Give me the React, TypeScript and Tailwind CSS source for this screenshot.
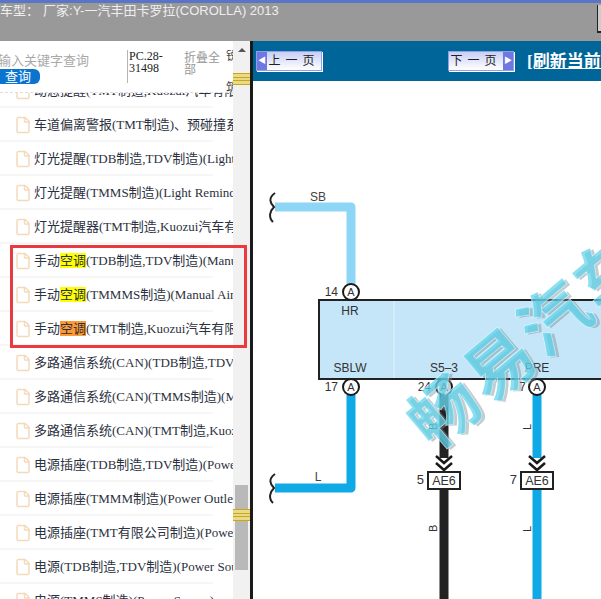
import { File } from "lucide-react"

const SERIF = '"Liberation Serif", "Noto Sans CJK SC", serif'
const SANS = '"Liberation Sans", "Noto Sans CJK SC", sans-serif'

interface Row {
  before: string
  hit?: string
  hitClass?: string
  after: string
}

const rows: Row[] = [
  { before: "动态提醒(TMT制造,Kuozui汽车有限公司制造)", after: "" },
  { before: "车道偏离警报(TMT制造)、预碰撞系统", after: "" },
  { before: "灯光提醒(TDB制造,TDV制造)(Light Reminder)", after: "" },
  { before: "灯光提醒(TMMS制造)(Light Reminder)", after: "" },
  { before: "灯光提醒器(TMT制造,Kuozui汽车有限公司)", after: "" },
  { before: "手动", hit: "空调", hitClass: "bg-[#ffff00]", after: "(TDB制造,TDV制造)(Manual Air)" },
  { before: "手动", hit: "空调", hitClass: "bg-[#ffff00]", after: "(TMMMS制造)(Manual Air)" },
  { before: "手动", hit: "空调", hitClass: "bg-[#ff9a33]", after: "(TMT制造,Kuozui汽车有限公司)" },
  { before: "多路通信系统(CAN)(TDB制造,TDV制造)", after: "" },
  { before: "多路通信系统(CAN)(TMMS制造)(Multiplex)", after: "" },
  { before: "多路通信系统(CAN)(TMT制造,Kuozui汽车)", after: "" },
  { before: "电源插座(TDB制造,TDV制造)(Power Outlet)", after: "" },
  { before: "电源插座(TMMM制造)(Power Outlet)", after: "" },
  { before: "电源插座(TMT有限公司制造)(Power Outlet)", after: "" },
  { before: "电源(TDB制造,TDV制造)(Power Source)", after: "" },
  { before: "电源(TMMS制造)(Power Source)", after: "" },
]

function Grip() {
  return (
    <div className="flex h-[12px] w-[17px] flex-col justify-between bg-[#ead98a]">
      <div className="h-[1px] bg-[#c9a912]" />
      <div className="h-[1px] bg-[#c9a912]" />
      <div className="h-[1px] bg-[#c9a912]" />
      <div className="h-[1px] bg-[#c9a912]" />
    </div>
  )
}

function PageButton({ label, dir }: { label: string; dir: "prev" | "next" }) {
  const arrow = (
    <div className="flex h-full w-[10px] items-center justify-center bg-[#6f78e0] text-[8px] leading-none text-white">
      {dir === "prev" ? "◀" : "▶"}
    </div>
  )
  return (
    <div className="flex h-[20px] w-[66px] border border-[#8fa0e8] bg-gradient-to-b from-[#c9cff5] to-white shadow-[1px_1px_0_#fff]">
      {dir === "prev" && arrow}
      <div className="flex-1 text-center text-[12px] leading-[19px] tracking-[5px] whitespace-nowrap text-[#222]">{label}</div>
      {dir === "next" && arrow}
    </div>
  )
}

function Pin({ x, y }: { x: number; y: number }) {
  return (
    <g>
      <circle cx={x} cy={y} r="8" fill="#fff" stroke="#1a1a1a" strokeWidth="2" />
      <text x={x} y={y + 4} textAnchor="middle" fontSize="11" fill="#333">A</text>
    </g>
  )
}

function Connector({ x, num }: { x: number; num: string }) {
  return (
    <g>
      <path d={`M${x - 8} 456 L${x} 463 L${x + 8} 456 M${x - 8} 463 L${x} 470 L${x + 8} 463`} fill="none" stroke="#1a1a1a" strokeWidth="2.5" />
      <rect x={x - 16} y="472" width="32" height="17" fill="#fff" stroke="#222" strokeWidth="2" />
      <text x={x} y="485" textAnchor="middle" fontSize="12.5" fill="#333">AE6</text>
      <text x={x - 20} y="484" textAnchor="end" fontSize="13" fill="#333">{num}</text>
    </g>
  )
}

function Diagram() {
  // coordinates are page coordinates, the viewBox starts at the panel's corner
  return (
    <svg viewBox="253 81 348 518" className="block h-[518px] w-[348px]" style={{ fontFamily: '"Liberation Sans", sans-serif' }}>
      <path d="M275 207 H351 V290" fill="none" stroke="#8dd6f5" strokeWidth="9" strokeLinejoin="round" />
      <path d="M275 193 C268 198 270 203 274 207 C270 211 268 217 273 222" fill="none" stroke="#222" strokeWidth="2" />
      <text x="318" y="201" textAnchor="middle" fontSize="12" fill="#444">SB</text>

      <rect x="319" y="300" width="290" height="79" fill="#c4e6f8" stroke="#222" strokeWidth="2" />
      <path d="M394 301 V378" stroke="#e6f4fb" strokeWidth="1" />
      <text x="350" y="315" textAnchor="middle" fontSize="12" fill="#333">HR</text>
      <text x="350" y="372" textAnchor="middle" fontSize="12" fill="#333">SBLW</text>
      <text x="444" y="372" textAnchor="middle" fontSize="12" fill="#333">S5–3</text>
      <text x="537" y="372" textAnchor="middle" fontSize="12" fill="#333">PRE</text>

      <path d="M351 395 V488 H275" fill="none" stroke="#0fa9e6" strokeWidth="9" strokeLinejoin="round" />
      <path d="M275 474 C268 479 270 484 274 488 C270 492 268 498 273 503" fill="none" stroke="#222" strokeWidth="2" />
      <text x="318" y="481" textAnchor="middle" fontSize="12" fill="#444">L</text>

      <path d="M444 395 V458" stroke="#222" strokeWidth="9" />
      <path d="M444 488 V599" stroke="#222" strokeWidth="9" />
      <path d="M537 395 V458" stroke="#0fa9e6" strokeWidth="9" />
      <path d="M537 488 V599" stroke="#0fa9e6" strokeWidth="9" />

      <Pin x={351} y={292} />
      <Pin x={351} y={387} />
      <Pin x={444} y={387} />
      <Pin x={537} y={387} />
      <text x="338" y="296" textAnchor="end" fontSize="12" fill="#333">14</text>
      <text x="338" y="391" textAnchor="end" fontSize="12" fill="#333">17</text>
      <text x="431" y="391" textAnchor="end" fontSize="12" fill="#333">24</text>
      <text x="526" y="391" textAnchor="end" fontSize="12" fill="#333">7</text>

      <Connector x={444} num="5" />
      <Connector x={537} num="7" />

      <text transform="translate(437 430) rotate(-90)" fontSize="11" fill="#333">B</text>
      <text transform="translate(437 532) rotate(-90)" fontSize="11" fill="#333">B</text>
      <text transform="translate(531 430) rotate(-90)" fontSize="11" fill="#333">L</text>
      <text transform="translate(531 532) rotate(-90)" fontSize="11" fill="#333">L</text>

      <g transform="translate(434 452) rotate(-40)" style={{ fontFamily: '"Noto Sans CJK SC", sans-serif' }} fontWeight="700" fontSize="68" letterSpacing="4">
        <text x="2" y="3" fill="#7d8f9a" fillOpacity="0.45">畅易汽车</text>
        <text fill="#5dd3ea" fillOpacity="0.72" stroke="#fff" strokeOpacity="0.7" strokeWidth="1" paintOrder="stroke">畅易汽车</text>
      </g>
    </svg>
  )
}

export default function App() {
  return (
    <div className="relative flex h-[599px] w-[601px] flex-col overflow-hidden bg-white" style={{ fontFamily: SERIF }}>
      <div className="flex h-[41px] shrink-0 justify-between border-t-[3px] border-[#5a74c8] bg-[#999999]">
        <p className="pt-[1px] text-[13px] leading-[14px] whitespace-nowrap text-[#eeeeee]" style={{ fontFamily: SANS }}>
          <span className="mr-[4px]">车型：</span>厂家:Y-一汽丰田卡罗拉(COROLLA) 2013
        </p>
        <div className="mt-[2px] h-[28px] w-[4px] border-b-2 border-l border-[#222] bg-[#cccccc]" />
      </div>

      <div className="flex min-h-0 flex-1">
        <div className="flex w-[233px] shrink-0 flex-col overflow-hidden">
          <div className="z-10 flex h-[52px] shrink-0 border-b border-dashed border-[#dddddd] bg-white">
            <div className="w-[127px] shrink-0 overflow-hidden pt-[12px] whitespace-nowrap">
              <p className="ml-[-2px] text-[13px] leading-[16px] text-[#a9a9a9]">输入关键字查询</p>
              <div className="h-[15px] w-[40px] rounded-r-[6px] bg-[#0b74cf] pl-[5px] text-[13px] leading-[15px] text-white">查询</div>
            </div>
            <div className="my-[9px] w-[57px] shrink-0 border-l border-[#b5b5b5] pl-[1px] text-[12px] leading-[12px] text-[#222]">
              PC.28-<br />31498
            </div>
            <div className="mt-[11px] w-[42px] shrink-0 text-[12px] leading-[12px] text-[#999]">折叠全部</div>
            <div className="mt-[9px] mb-[-2px] flex flex-col justify-between overflow-hidden text-[12px] leading-[12px] text-[#444]">
              <span>锐</span>
              <span>筑</span>
            </div>
          </div>
          <div className="mt-[-19px] flex min-h-0 flex-1 flex-col overflow-hidden">
            {rows.map((row, i) => (
              <div key={i} className="flex h-[34px] w-[213px] shrink-0 items-center border-b-2 border-[#f6f6f6] pt-[2px] pl-[14px]">
                <File size={18} strokeWidth={2} color="#f5d9bb" className="shrink-0" />
                <div className="ml-[2px] text-[13px] whitespace-nowrap text-[#2b3140]">
                  {row.before}
                  {row.hit && <span className={row.hitClass}>{row.hit}</span>}
                  {row.after}
                </div>
              </div>
            ))}
          </div>
        </div>

        <div className="relative flex w-[17px] shrink-0 flex-col items-center bg-[#f1f1f1]">
          <div className="mt-[7px] h-0 w-0 border-x-[4px] border-b-[4px] border-x-transparent border-b-[#555]" />
          <div className="absolute top-[444px] left-[2px] h-[85px] w-[13px] bg-[#b9b9b9]" />
          <div className="absolute top-[32px] left-0"><Grip /></div>
          <div className="absolute top-[468px] left-0"><Grip /></div>
        </div>

        <div className="w-[3px] shrink-0 bg-[#1a1a1a]" />

        <div className="flex min-w-0 flex-1 flex-col">
          <div className="z-10 flex h-[40px] shrink-0 items-center overflow-hidden bg-[#006699] pb-[1px]">
            <div className="ml-[3px] shrink-0"><PageButton label="上一页" dir="prev" /></div>
            <div className="ml-[126px] shrink-0"><PageButton label="下一页" dir="next" /></div>
            <span className="ml-[13px] shrink-0 pt-[2px] text-[17px] font-bold whitespace-nowrap text-white underline">[刷新当前页]</span>
          </div>
          <Diagram />
        </div>
      </div>

      <div className="absolute top-[245px] left-[10px] h-[103px] w-[237px] border-[3px] border-[#ea3a3f]" />
    </div>
  )
}
